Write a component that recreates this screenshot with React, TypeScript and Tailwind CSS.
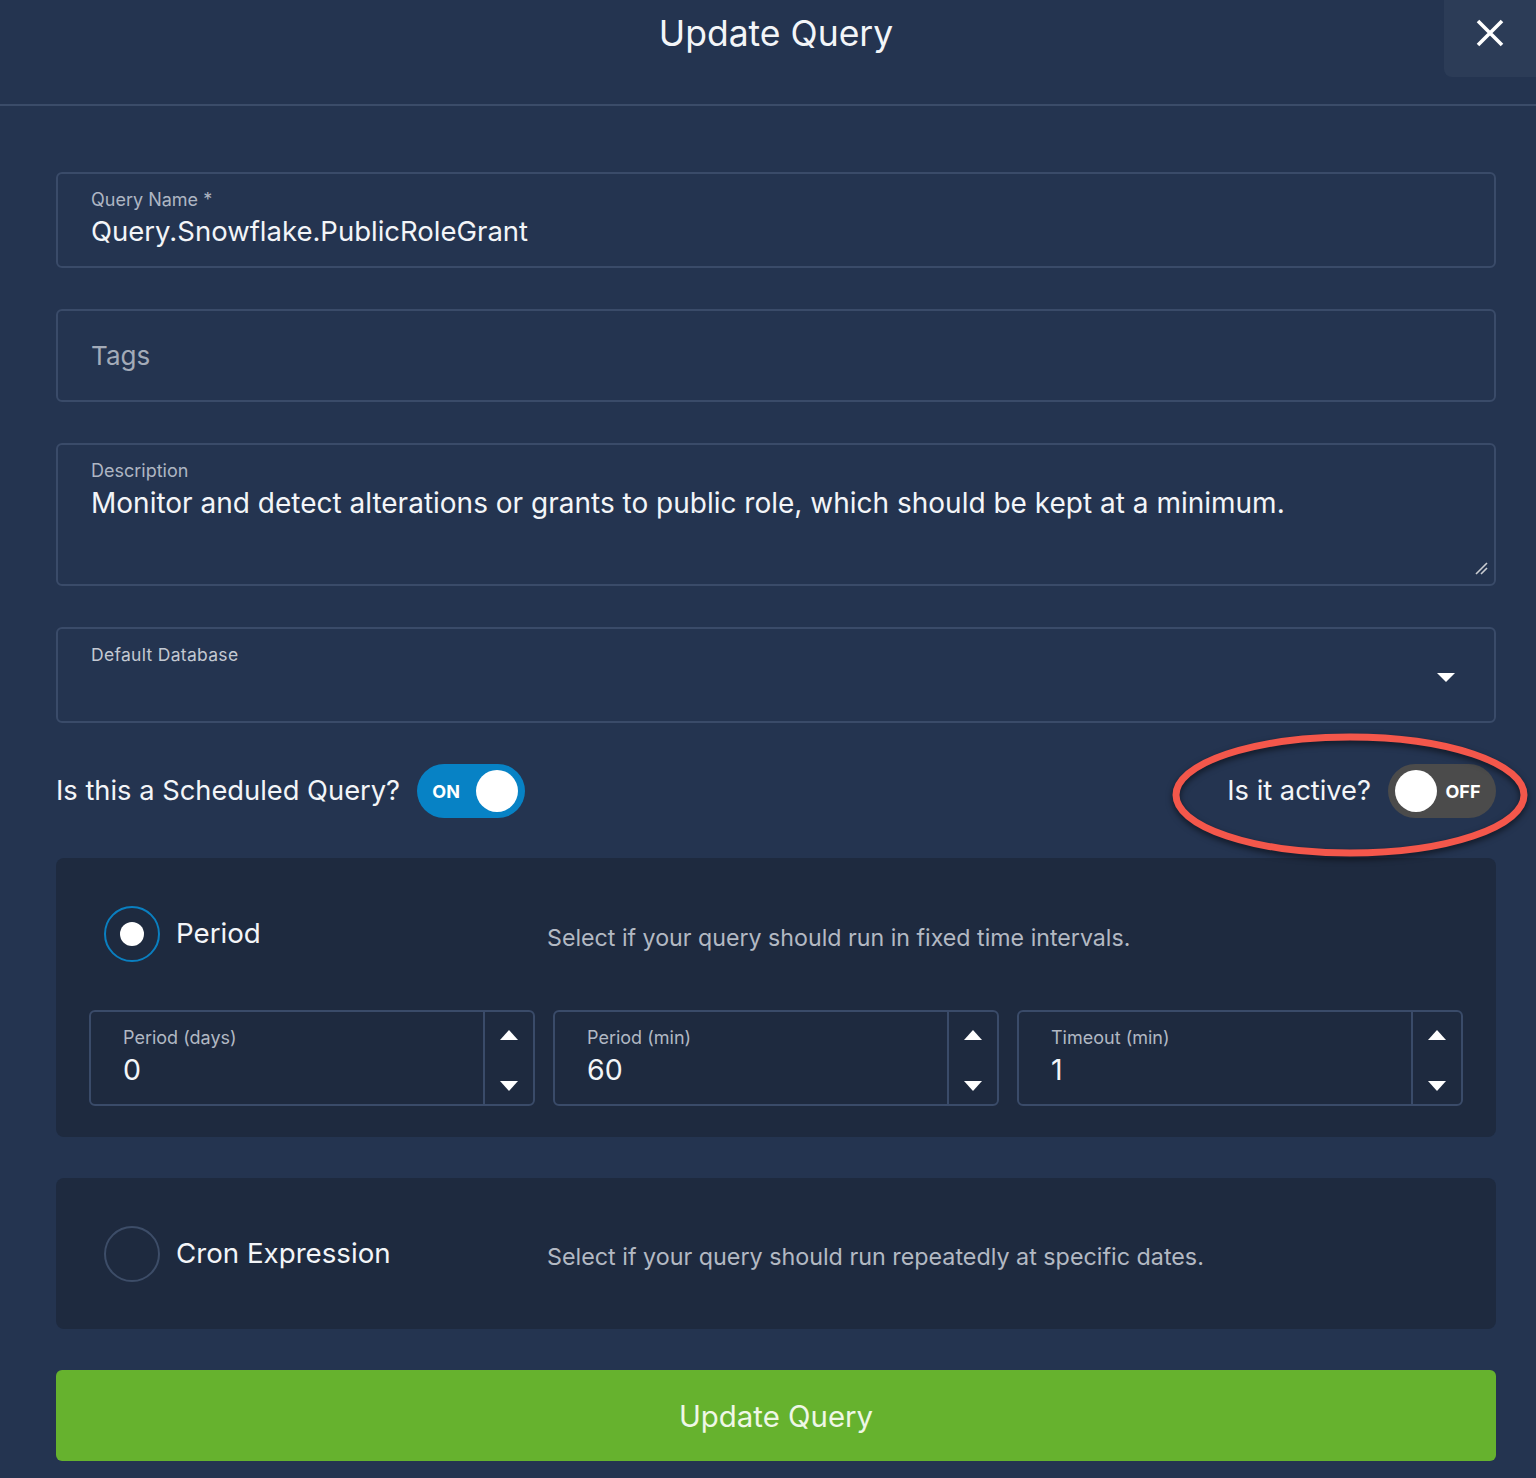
import React from 'react';

const font = { fontFamily: 'Inter, "Noto Sans", sans-serif' };

interface FieldProps {
  label: string;
  value: string;
  className?: string;
}

const Field: React.FC<FieldProps> = ({ label, value, className = '' }) => (
  <div className={`relative rounded-md border-2 border-[#3a4b69] px-[33px] ${className}`}>
    <div className="text-[18px] leading-[22px] text-[#aeb6c3]">{label}</div>
    <div className="mt-[3px] text-[27.5px] leading-[34px] text-[#f3f5f8]">{value}</div>
  </div>
);

const Toggle: React.FC<{ on: boolean }> = ({ on }) => (
  <div
    className={`flex h-[54px] w-[108px] items-center rounded-full px-[7px] ${
      on ? 'bg-[#0782c5] flex-row' : 'bg-[#4b4b4b] flex-row-reverse'
    }`}
  >
    <span className={`flex-1 text-center text-[18px] font-bold text-white ${on ? 'mr-[8px]' : ''}`}>
      {on ? 'ON' : 'OFF'}
    </span>
    <span className="h-[42px] w-[42px] rounded-full bg-white" />
  </div>
);

const Radio: React.FC<{ checked: boolean }> = ({ checked }) => (
  <div
    className={`flex h-[56px] w-[56px] items-center justify-center rounded-full border-2 ${
      checked ? 'border-[#0a7fc0]' : 'border-[#3d4d68]'
    }`}
  >
    {checked && <div className="h-[24px] w-[24px] rounded-full bg-white" />}
  </div>
);

const Triangle: React.FC<{ up?: boolean }> = ({ up }) => (
  <svg width="18" height="10" viewBox="0 0 18 10">
    <path d={up ? 'M0 10 L9 0 L18 10 Z' : 'M0 0 L9 10 L18 0 Z'} fill="#ffffff" />
  </svg>
);

const NumberField: React.FC<{ label: string; value: string }> = ({ label, value }) => (
  <div className="flex h-[96px] rounded-md border-2 border-[#3a4b69]">
    <div className="flex-1 px-[32px] pt-[15px]">
      <div className="text-[18px] leading-[22px] text-[#b1b8c3]">{label}</div>
      <div className="mt-[3px] text-[28.5px] leading-[36px] text-[#f3f5f8]">{value}</div>
    </div>
    <div className="flex w-[50px] flex-col items-center justify-between border-l-2 border-[#3a4b69] pb-[13px] pt-[18px]">
      <Triangle up />
      <Triangle />
    </div>
  </div>
);

export default function App() {
  return (
    <div className="min-h-[1478px] bg-[#243450]" style={font}>
      {/* Header */}
      <div className="relative h-[106px] border-b-2 border-[#3b4c69]">
        <h1 className="pl-[56px] pr-[40px] pt-[11px] text-center text-[35.5px] font-normal leading-[46px] text-[#f3f5f8]">
          Update Query
        </h1>
        <button className="absolute right-0 top-0 flex h-[77px] w-[92px] justify-center rounded-bl-lg bg-[#2c3c57] pt-[18px]">
          <svg width="30" height="30" viewBox="0 0 30 30">
            <path d="M3 3 L27 27 M27 3 L3 27" stroke="#ffffff" strokeWidth="3.6" />
          </svg>
        </button>
      </div>

      <div className="pl-[56px] pr-[40px] pt-[66px]">
        <Field label="Query Name *" value="Query.Snowflake.PublicRoleGrant" className="h-[96px] pt-[15px]" />

        <div className="mt-[41px] flex h-[93px] items-center rounded-md border-2 border-[#3a4b69] px-[33px]">
          <span className="text-[26px] text-[#a3abb8]">Tags</span>
        </div>

        <div className="relative mt-[41px] h-[143px] rounded-md border-2 border-[#3a4b69] px-[33px] pt-[15px]">
          <div className="text-[18px] leading-[22px] text-[#aeb6c3]">Description</div>
          <div className="mt-[4px] text-[28px] leading-[34px] text-[#f3f5f8]">
            Monitor and detect alterations or grants to public role, which should be kept at a minimum.
          </div>
          <svg className="absolute bottom-[9px] right-[6px]" width="14" height="14" viewBox="0 0 14 14">
            <path d="M2 13 L13 2 M7 13 L13 7" stroke="#c9ccd1" strokeWidth="1.6" />
          </svg>
        </div>

        <div className="relative mt-[41px] h-[96px] rounded-md border-2 border-[#3a4b69] px-[33px] pt-[15px]">
          <div className="text-[17.5px] leading-[22px] tracking-[0.3px] text-[#c3c9d2]">Default Database</div>
          <svg className="absolute right-[39px] top-[44px]" width="18" height="9" viewBox="0 0 18 9">
            <path d="M0 0 L9 9 L18 0 Z" fill="#ffffff" />
          </svg>
        </div>

        {/* Toggles */}
        <div className="mt-[41px] flex h-[54px] items-center justify-between">
          <div className="flex items-center gap-[17px]">
            <span className="text-[27.3px] text-[#f3f5f8]">Is this a Scheduled Query?</span>
            <Toggle on />
          </div>
          <div className="relative flex items-center gap-[17px]">
            <span className="text-[27.3px] text-[#f3f5f8]">Is it active?</span>
            <Toggle on={false} />
            <svg
              className="pointer-events-none absolute left-[-58px] top-[-32px] drop-shadow-[0_3px_3px_rgba(0,0,0,0.55)]"
              width="362"
              height="128"
              viewBox="0 0 362 128"
            >
              <ellipse cx="181" cy="63" rx="174" ry="58" fill="none" stroke="#f4574b" strokeWidth="7" />
            </svg>
          </div>
        </div>

        {/* Period */}
        <div className="mt-[40px] rounded-lg bg-[#1e2a3f] px-[33px] pb-[31px] pt-[48px]">
          <div className="flex items-center pl-[15px]">
            <div className="flex w-[443px] items-center gap-[16px]">
              <Radio checked />
              <span className="text-[27.7px] text-[#f3f5f8]">Period</span>
            </div>
            <span className="mt-[8px] text-[23.2px] text-[#b3b9c3]">
              Select if your query should run in fixed time intervals.
            </span>
          </div>
          <div className="mt-[48px] grid grid-cols-3 gap-[18px]">
            <NumberField label="Period (days)" value="0" />
            <NumberField label="Period (min)" value="60" />
            <NumberField label="Timeout (min)" value="1" />
          </div>
        </div>

        {/* Cron */}
        <div className="mt-[41px] flex h-[151px] items-center rounded-lg bg-[#1e2a3f] pl-[48px]">
          <div className="flex w-[443px] items-center gap-[16px]">
            <Radio checked={false} />
            <span className="text-[27.7px] text-[#f3f5f8]">Cron Expression</span>
          </div>
          <span className="mt-[8px] text-[23.3px] text-[#b3b9c3]">
            Select if your query should run repeatedly at specific dates.
          </span>
        </div>

        <button className="mt-[41px] flex h-[91px] w-full items-center justify-center rounded-md bg-[#66b22e] pt-[4px] text-[29.4px] text-[#eef7e6]">
          Update Query
        </button>
      </div>
    </div>
  );
}
